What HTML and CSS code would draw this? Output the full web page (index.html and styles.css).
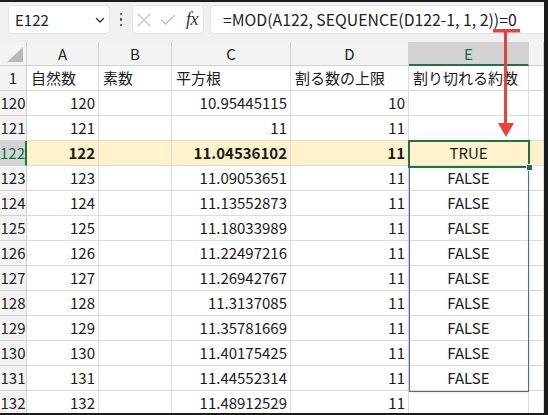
FILE: index.html
```html
<!DOCTYPE html>
<html lang="ja">
<head>
<meta charset="utf-8">
<title>Excel SEQUENCE</title>
<link rel="stylesheet" href="styles.css">
</head>
<body>
<div class="app">
  <div class="toolbar">
    <div class="namebox">
      <span>E122</span>
      <svg class="chev" width="10" height="6" viewBox="0 0 10 6"><polyline points="1,1 5,5 9,1" fill="none" stroke="#333" stroke-width="1.3"/></svg>
    </div>
    <div class="dots"><i></i><i></i><i></i></div>
    <div class="fbtns">
      <svg class="ic-x" width="14" height="14" viewBox="0 0 14 14"><path d="M1 1 L13 13 M13 1 L1 13" stroke="#c4c4c4" stroke-width="1.3" fill="none"/></svg>
      <svg class="ic-ok" width="16" height="11" viewBox="0 0 16 11"><polyline points="1,5.5 5.5,10 15,1" fill="none" stroke="#c0c0c0" stroke-width="1.3"/></svg>
      <span class="fx">fx</span>
    </div>
    <div class="formula">=MOD(A122, SEQUENCE(D122-1, 1, 2))=0</div>
  </div>

  <div class="sheet">
    <div class="grid">
      <div class="corner"><svg width="18" height="16" viewBox="0 0 18 16"><polygon points="17,0 17,15 1,15" fill="#b9b9b9"/></svg></div>
      <div class="ch">A</div><div class="ch">B</div><div class="ch">C</div><div class="ch">D</div><div class="ch on">E</div><div class="ch"></div>

      <div class="rh">1</div><div class="c">自然数</div><div class="c">素数</div><div class="c">平方根</div><div class="c">割る数の上限</div><div class="c">割り切れる約数</div><div class="c"></div>

      <div class="rh">120</div><div class="c n">120</div><div class="c"></div><div class="c n">10.95445115</div><div class="c n">10</div><div class="c"></div><div class="c"></div>
      <div class="rh">121</div><div class="c n">121</div><div class="c"></div><div class="c n">11</div><div class="c n">11</div><div class="c"></div><div class="c"></div>
      <div class="rh on">122</div><div class="c n hl b">122</div><div class="c hl"></div><div class="c n hl b">11.04536102</div><div class="c n hl b">11</div><div class="c m hl">TRUE</div><div class="c hl"></div>
      <div class="rh">123</div><div class="c n">123</div><div class="c"></div><div class="c n">11.09053651</div><div class="c n">11</div><div class="c m">FALSE</div><div class="c"></div>
      <div class="rh">124</div><div class="c n">124</div><div class="c"></div><div class="c n">11.13552873</div><div class="c n">11</div><div class="c m">FALSE</div><div class="c"></div>
      <div class="rh">125</div><div class="c n">125</div><div class="c"></div><div class="c n">11.18033989</div><div class="c n">11</div><div class="c m">FALSE</div><div class="c"></div>
      <div class="rh">126</div><div class="c n">126</div><div class="c"></div><div class="c n">11.22497216</div><div class="c n">11</div><div class="c m">FALSE</div><div class="c"></div>
      <div class="rh">127</div><div class="c n">127</div><div class="c"></div><div class="c n">11.26942767</div><div class="c n">11</div><div class="c m">FALSE</div><div class="c"></div>
      <div class="rh">128</div><div class="c n">128</div><div class="c"></div><div class="c n">11.3137085</div><div class="c n">11</div><div class="c m">FALSE</div><div class="c"></div>
      <div class="rh">129</div><div class="c n">129</div><div class="c"></div><div class="c n">11.35781669</div><div class="c n">11</div><div class="c m">FALSE</div><div class="c"></div>
      <div class="rh">130</div><div class="c n">130</div><div class="c"></div><div class="c n">11.40175425</div><div class="c n">11</div><div class="c m">FALSE</div><div class="c"></div>
      <div class="rh">131</div><div class="c n">131</div><div class="c"></div><div class="c n">11.44552314</div><div class="c n">11</div><div class="c m">FALSE</div><div class="c"></div>
      <div class="rh">132</div><div class="c n">132</div><div class="c"></div><div class="c n">11.48912529</div><div class="c n">11</div><div class="c"></div><div class="c"></div>
    </div>
    <div class="spill"></div>
    <div class="sel"><i class="handle"></i></div>
  </div>

  <svg class="arrow" width="544" height="411" viewBox="0 0 544 411">
    <rect x="493" y="27" width="27" height="3.5" fill="#e8413f"/>
    <rect x="504" y="27" width="3" height="96" fill="#e8413f"/>
    <polygon points="498,121 514,121 506,135" fill="#e8413f"/>
  </svg>
</div>
</body>
</html>
```

FILE: styles.css
```css
* { box-sizing: border-box; }

body {
  margin: 0;
  width: 548px;
  height: 415px;
  background: #1c1c1c;
  overflow: hidden;
  font-family: "Noto Sans CJK JP", "Noto Sans", sans-serif;
  color: #1a1a1a;
}

.app {
  position: relative;
  width: 544px;
  height: 411px;
  margin-top: 2px;
  background: #ffffff;
  overflow: hidden;
}

/* ---------- toolbar ---------- */
.toolbar {
  height: 40px;
  background: #f0f0f0;
  display: flex;
  align-items: flex-start;
  padding: 3px 0 0 8px;
}

.namebox {
  width: 102px;
  height: 29px;
  background: #fff;
  border: 1px solid #e3e3e3;
  border-radius: 5px;
  display: flex;
  align-items: center;
  justify-content: space-between;
  padding: 0 4px 0 6px;
  font-size: 15px;
  color: #222;
}

.dots {
  width: 22px;
  height: 29px;
  display: flex;
  flex-direction: column;
  align-items: center;
  justify-content: center;
  gap: 3px;
}
.dots i {
  display: block;
  width: 2.5px;
  height: 2.5px;
  border-radius: 50%;
  background: #444;
}

.fbtns {
  width: 72px;
  height: 29px;
  background: #fff;
  border: 1px solid #e3e3e3;
  border-radius: 5px;
  display: flex;
  align-items: center;
  padding-left: 4px;
}
.ic-x { margin-right: 9px; }
.ic-ok { margin-right: 10px; }
.fx {
  font-family: "Liberation Serif", "DejaVu Serif", serif;
  font-style: italic;
  font-size: 18px;
  color: #333;
  letter-spacing: -0.5px;
}

.formula {
  flex: 1;
  margin-left: 6px;
  height: 29px;
  background: #fff;
  border: 1px solid #e3e3e3;
  border-right: none;
  border-radius: 5px 0 0 5px;
  display: flex;
  align-items: center;
  padding-left: 12px;
  font-size: 15.8px;
  color: #222;
  white-space: nowrap;
}

/* ---------- sheet ---------- */
.sheet {
  position: relative;
}

.grid {
  display: grid;
  grid-template-columns: 27px 72px 73px 119px 118px 120px 15px;
  grid-template-rows: 24px;
  grid-auto-rows: 25px;
}

.grid > div {
  border-right: 1px solid #dcdcdc;
  border-bottom: 1px solid #dcdcdc;
  font-size: 15px;
  line-height: 24px;
  white-space: nowrap;
  overflow: hidden;
}

.corner {
  background: #f3f3f3;
  display: flex;
  align-items: flex-end;
  justify-content: flex-end;
  padding: 0 2px 2px 0;
  border-color: #cfcfcf !important;
}
.corner svg { display: block; }

.ch {
  background: #f3f3f3;
  text-align: center;
  border-color: #d2d2d2 !important;
  color: #222;
}
.ch.on {
  background: #d3d3d3;
  color: #1e6b40;
  border-bottom: 2px solid #217346 !important;
}

.rh {
  background: #f3f3f3;
  text-align: center;
  border-color: #d2d2d2 !important;
  color: #222;
}
.rh.on {
  background: #d3d3d3;
  color: #1e6b40;
  border-right: 2px solid #217346 !important;
}

.c { padding: 0 4px; }
.c.n { text-align: right; padding: 0 3px 0 2px; }
.c.m { text-align: center; }
.c.hl { background: #fff2cc; }
.c.b { font-weight: bold; }

/* overlays */
.spill {
  position: absolute;
  left: 409px;
  top: 99px;
  width: 120px;
  height: 251px;
  border: 1px solid #3b6cc7;
  box-shadow: 0 0 4px rgba(0, 0, 0, 0.12);
  pointer-events: none;
}

.sel {
  position: absolute;
  left: 408px;
  top: 98px;
  width: 122px;
  height: 28px;
  border: 2px solid #217346;
  pointer-events: none;
}
.handle {
  position: absolute;
  right: -5px;
  bottom: -5px;
  width: 7px;
  height: 7px;
  background: #217346;
  border: 1px solid #fff;
}

.arrow {
  position: absolute;
  left: 0;
  top: 0;
  pointer-events: none;
}
```
